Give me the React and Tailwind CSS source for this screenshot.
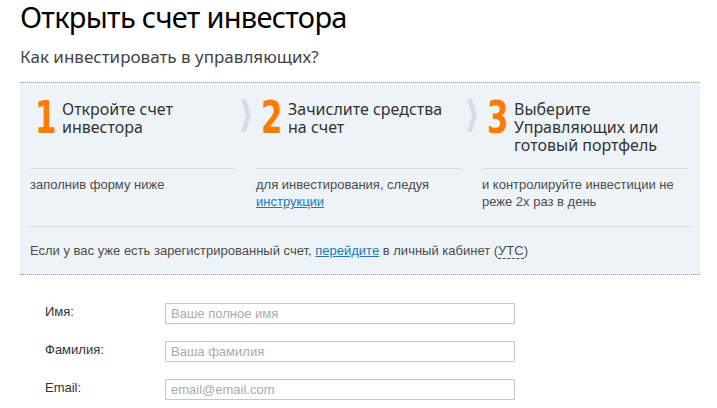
import React from 'react';

const steps = [
    { num: '1', title: ['Откройте счет', 'инвестора'], text: <>заполнив форму ниже</> },
    {
        num: '2',
        title: ['Зачислите средства', 'на счет'],
        text: (
            <>
                для инвестирования, следуя<br />
                <a href="#" className="text-[#1b78c5] underline">инструкции</a>
            </>
        ),
    },
    {
        num: '3',
        title: ['Выберите', 'Управляющих или', 'готовый портфель'],
        text: <>и контролируйте инвестиции не<br />реже 2х раз в день</>,
    },
];

const Chevron = () => (
    <div className="flex justify-center pt-[16px]">
        <svg width="10" height="33" viewBox="0 0 10 33">
            <polygon points="0,0 5,0 10,16.5 5,33 0,33 5,16.5" fill="#d6dce5" />
        </svg>
    </div>
);

const fields = [
    { label: 'Имя:', placeholder: 'Ваше полное имя' },
    { label: 'Фамилия:', placeholder: 'Ваша фамилия' },
    { label: 'Email:', placeholder: 'email@email.com' },
];

const App = () => {
    return (
        <div className="w-[717px] h-[408px] overflow-hidden bg-white px-[20px] font-['Liberation_Sans',Arial,sans-serif]">
            <h1 className="font-['Noto_Sans',sans-serif] text-[29px] leading-[34px] text-black tracking-[-0.7px]">
                Открыть счет инвестора
            </h1>
            <h2 className="mt-[12px] font-['Noto_Sans',sans-serif] text-[17px] leading-[22px] text-[#444]">
                Как инвестировать в управляющих?
            </h2>

            <div className="mt-[14px] w-[680px] bg-[#eef3f7] border-y border-dotted border-[#8d96a3] px-[10px]">
                <div className="grid grid-cols-[206px_20px_206px_20px_206px]">
                    {steps.map((s, i) => (
                        <React.Fragment key={s.num}>
                            {i > 0 && <Chevron />}
                            <div className="flex pt-[16px] pb-[14px] pl-[5px] border-b border-[#d6dde6]">
                                <span className="w-[27px] shrink-0 origin-left scale-x-[0.78] font-['DejaVu_Sans_Condensed','DejaVu_Sans',sans-serif] font-bold text-[44px] leading-[38px] text-[#ff7a00]">
                                    {s.num}
                                </span>
                                <div className="pt-[1px] font-['Noto_Sans',sans-serif] text-[16px] leading-[18px] text-[#333]">
                                    {s.title.map((t) => (
                                        <div key={t}>{t}</div>
                                    ))}
                                </div>
                            </div>
                        </React.Fragment>
                    ))}
                    {steps.map((s, i) => (
                        <React.Fragment key={'d' + s.num}>
                            {i > 0 && <div />}
                            <p className="pt-[7px] text-[13px] leading-[17px] text-[#4d4d4d] h-[57px]">{s.text}</p>
                        </React.Fragment>
                    ))}
                </div>
                <div className="border-t border-[#d6dde6] pt-[16px] pb-[16px] text-[13px] leading-[15px] text-[#4d4d4d]">
                    Если у вас уже есть зарегистрированный счет,{' '}
                    <a href="#" className="text-[#1b78c5] underline">перейдите</a> в личный кабинет (
                    <span className="border-b border-dashed border-[#4d4d4d]">УТС</span>)
                </div>
            </div>

            <form className="mt-[28px] flex flex-col gap-[17px]">
                {fields.map((f) => (
                    <div key={f.label} className="flex items-start">
                        <label className="w-[145px] pl-[25px] pt-[1px] text-[13px] leading-[16px] text-[#333]">{f.label}</label>
                        <input
                            placeholder={f.placeholder}
                            className="w-[350px] h-[21px] border border-[#c8c8c8] px-[5px] text-[13px] text-[#333] placeholder:text-[#aaa] outline-none"
                        />
                    </div>
                ))}
            </form>
        </div>
    );
};

export default App;
